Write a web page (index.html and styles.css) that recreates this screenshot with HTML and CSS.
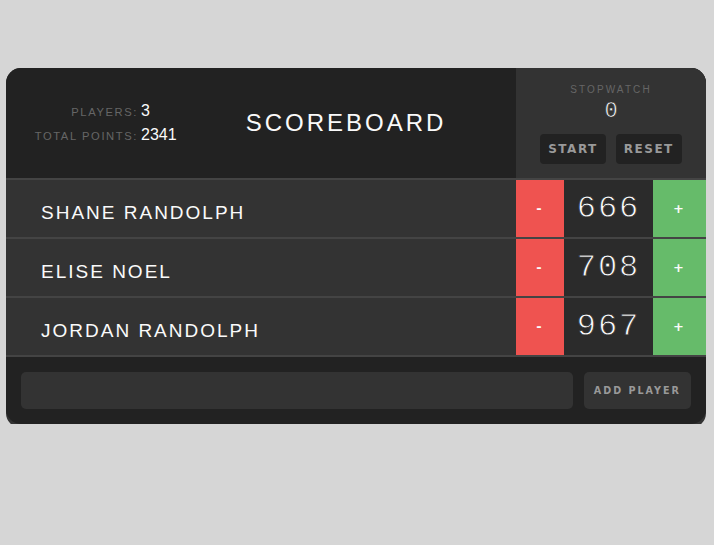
FILE: index.html
```html
<!DOCTYPE html>
<html>
<head>
<meta charset="utf-8">
<title>Scoreboard</title>
<link rel="stylesheet" href="styles.css">
</head>
<body>
<div class="scoreboard">
  <div class="header">
    <div class="stats">
      <span class="stat-label">Players:</span><span class="stat-value">3</span>
      <span class="stat-label">Total Points:</span><span class="stat-value">2341</span>
    </div>
    <h1 class="title">Scoreboard</h1>
    <div class="stopwatch">
      <h2 class="stopwatch-label">Stopwatch</h2>
      <div class="stopwatch-time">0</div>
      <div class="stopwatch-buttons">
        <button class="sw-btn">Start</button>
        <button class="sw-btn">Reset</button>
      </div>
    </div>
  </div>
  <div class="players">
    <div class="player">
      <div class="player-name">Shane Randolph</div>
      <div class="counter">
        <button class="counter-action decrement">-</button>
        <div class="counter-score">666</div>
        <button class="counter-action increment">+</button>
      </div>
    </div>
    <div class="player">
      <div class="player-name">Elise Noel</div>
      <div class="counter">
        <button class="counter-action decrement">-</button>
        <div class="counter-score">708</div>
        <button class="counter-action increment">+</button>
      </div>
    </div>
    <div class="player">
      <div class="player-name">Jordan Randolph</div>
      <div class="counter">
        <button class="counter-action decrement">-</button>
        <div class="counter-score">967</div>
        <button class="counter-action increment">+</button>
      </div>
    </div>
  </div>
  <form class="add-player-form">
    <input class="add-input" type="text" value="">
    <button class="add-btn" type="button">Add Player</button>
  </form>
</div>
</body>
</html>
```

FILE: styles.css
```css
html, body {
  margin: 0;
  padding: 0;
}
body {
  background: #d6d6d6;
  font-family: "Liberation Sans", Arial, sans-serif;
  color: #fafafa;
  text-transform: uppercase;
  padding-top: 68px;
}
.scoreboard {
  width: 700px;
  margin-left: 6px;
  background: #333;
  border-radius: 15px;
  box-shadow: 0 4px 0 #333;
}
.header {
  display: flex;
  height: 110px;
  background: #222;
  border-radius: 15px 15px 0 0;
  border-bottom: 2px solid #444;
}
.stats {
  flex: 0 0 170px;
  min-width: 0;
  box-sizing: border-box;
  padding-left: 10px;
  display: grid;
  grid-template-columns: 122px 35px;
  column-gap: 3px;
  row-gap: 5px;
  align-content: center;
  align-items: baseline;
}
.stat-label {
  text-align: right;
  font-size: 11.2px;
  letter-spacing: 1.6px;
  color: #666;
  line-height: 18px;
  white-space: nowrap;
}
.stat-value {
  font-size: 16px;
  line-height: 18px;
  white-space: nowrap;
}
.title {
  flex: 1 1 0;
  min-width: 0;
  margin: 0;
  font-size: 24px;
  font-weight: normal;
  letter-spacing: 3px;
  text-align: center;
  align-self: center;
}
.stopwatch {
  flex: 0 0 190px;
  background: #333;
  border-top-right-radius: 15px;
  padding-top: 16px;
  box-sizing: border-box;
  text-align: center;
}
.stopwatch-label {
  margin: 0;
  font-size: 10px;
  line-height: 12px;
  font-weight: normal;
  letter-spacing: 2.1px;
  color: #666;
}
.stopwatch-time {
  margin-top: 4px;
  font-family: "Liberation Mono", monospace;
  font-size: 22px;
  line-height: 24px;
  -webkit-text-stroke: 0.6px #333;
}
.stopwatch-buttons {
  display: flex;
  justify-content: center;
  gap: 10px;
  margin-top: 10px;
}
.sw-btn {
  height: 30px;
  padding: 0 8px;
  border: none;
  border-radius: 4px;
  background: #222;
  color: #999;
  font-family: "DejaVu Sans", sans-serif;
  font-size: 12px;
  font-weight: bold;
  letter-spacing: 1.5px;
  text-transform: uppercase;
}
.player {
  display: flex;
  height: 57px;
  border-bottom: 2px solid #444;
}
.player-name {
  flex: 1;
  padding: 22px 0 0 35px;
  font-size: 19px;
  line-height: 22px;
  letter-spacing: 2px;
}
.counter {
  display: flex;
  width: 190px;
}
.counter-action {
  border: none;
  padding: 0;
  color: #fafafa;
  font-family: "DejaVu Sans", sans-serif;
  font-size: 13px;
  font-weight: bold;
  letter-spacing: 2px;
}
.decrement {
  width: 48px;
  background: #ef5350;
}
.increment {
  width: 53px;
  background: #66bb6a;
}
.counter-score {
  flex: 1;
  background: #2b2b2b;
  text-align: center;
  font-family: "Liberation Mono", monospace;
  font-size: 32px;
  line-height: 37px;
  padding: 10px 0;
  letter-spacing: 2px;
  -webkit-text-stroke: 0.8px #2b2b2b;
}
.add-player-form {
  display: flex;
  margin: 0;
  background: #222;
  border-radius: 0 0 15px 15px;
  padding: 15px;
  gap: 11px;
}
.add-input {
  flex: 1;
  height: 37px;
  box-sizing: border-box;
  border: none;
  border-radius: 5px;
  background: #333;
  color: #999;
  outline: none;
}
.add-btn {
  height: 37px;
  padding: 0 10px;
  border: none;
  border-radius: 5px;
  background: #333;
  color: #999;
  font-family: "DejaVu Sans", sans-serif;
  font-size: 9.6px;
  font-weight: bold;
  letter-spacing: 2px;
  text-transform: uppercase;
}
```
